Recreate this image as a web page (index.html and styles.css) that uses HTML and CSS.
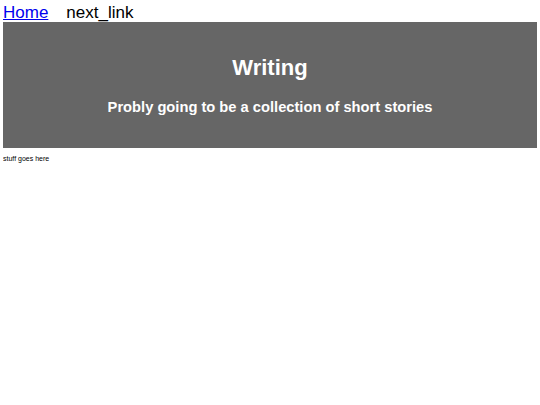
FILE: index.html
```html
<!DOCTYPE html>
<html lang="en">
<head>
    <meta charset="UTF-8">
    <title>Writing</title>
    <link rel="stylesheet" href="styles.css">
</head>
<body>
    <nav class="nav">
        <a href="#">Home</a>
        <span class="next">next_link</span>
    </nav>

    <header class="banner">
        <h1>Writing</h1>
        <h2>Probly going to be a collection of short stories</h2>
    </header>

    <p class="content">stuff goes here</p>
</body>
</html>
```

FILE: styles.css
```css
body {
    font-family: "Liberation Sans", Arial, sans-serif;
    margin: 3px;
}
.nav {
    font-size: 17px;
    line-height: 19px;
    display: flex;
    gap: 18px;
}
.nav a {
    color: #0000ee;
}
.banner {
    background-color: #666666;
    color: white;
    text-align: center;
    padding: 33px 0 33px;
}
.banner h1 {
    font-size: 22px;
    margin: 0 0 18px;
}
.banner h2 {
    font-size: 14.7px;
    margin: 0;
}
.content {
    font-size: 7px;
    margin: 7px 0;
}
```
